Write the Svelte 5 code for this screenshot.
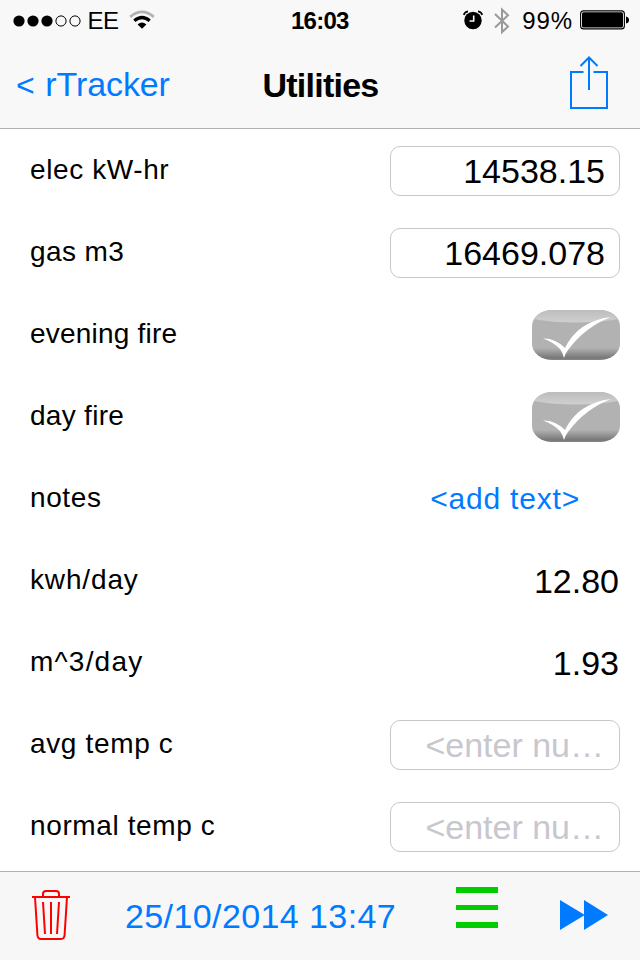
<script>
  const rows = [
    { label: 'elec kW-hr', tracking: 0.6, type: 'field', value: '14538.15' },
    { label: 'gas m3', tracking: 0.4, type: 'field', value: '16469.078' },
    { label: 'evening fire', tracking: 0.22, type: 'check' },
    { label: 'day fire', tracking: 0.3, type: 'check' },
    { label: 'notes', tracking: 0.6, type: 'link', value: '<add text>' },
    { label: 'kwh/day', tracking: 0.85, type: 'value', value: '12.80' },
    { label: 'm^3/day', tracking: 1.2, type: 'value', value: '1.93' },
    { label: 'avg temp c', tracking: 0.65, type: 'empty', value: '<enter nu…' },
    { label: 'normal temp c', tracking: 0.62, type: 'empty', value: '<enter nu…' }
  ];
</script>

<div class="screen">
  <header>
    <div class="status">
      <div class="side left">
        <svg class="dots" width="68" height="14" viewBox="0 0 68 14">
          <circle cx="6" cy="7" r="5.6" /><circle cx="20" cy="7" r="5.6" /><circle cx="34" cy="7" r="5.6" />
          <circle class="open" cx="48" cy="7" r="5.1" /><circle class="open" cx="62" cy="7" r="5.1" />
        </svg>
        <span class="carrier">EE</span>
        <svg class="wifi" width="26" height="20" viewBox="0 0 26 20" fill="none">
          <path d="M1.2 6.8Q13 -3 24.8 6.8" stroke="#b2b2b2" stroke-width="2.8" />
          <path d="M5.3 10.8Q13 4.2 20.7 10.8" stroke="#000" stroke-width="3.2" />
          <path d="M8.6 14.4Q13 10.6 17.4 14.4L13 18.8Z" fill="#000" />
        </svg>
      </div>
      <span class="time">16:03</span>
      <div class="side right">
        <svg class="alarm" width="20" height="20" viewBox="0 0 20 20" fill="none">
          <circle cx="10" cy="10.5" r="8.7" fill="#000" />
          <path d="M10.7 5.5V11H6.5" stroke="#f8f8f8" stroke-width="1.6" />
          <path d="M.8 5Q1.3 2 5 1.4M15 1.4Q18.7 2 19.2 5" stroke="#000" stroke-width="1.6" />
        </svg>
        <svg class="bluetooth" width="16" height="28" viewBox="0 0 16 28" fill="none">
          <path d="M1 7L14 19.5L8 25.2V2.5L14 8.2L1 20.5" stroke="#999" stroke-width="2" />
        </svg>
        <span class="percent">99%</span>
        <svg class="battery" width="50" height="20" viewBox="0 0 50 20">
          <rect x=".6" y=".9" width="43.8" height="18" rx="3" fill="none" stroke="#000" stroke-width="1.1" />
          <rect x="2" y="2.3" width="41" height="15.2" rx="1.6" />
          <path d="M46 6.5Q49 7 49 10T46 13.5Z" />
        </svg>
      </div>
    </div>
    <nav>
      <span class="back"><span class="chevron">&lt;</span> rTracker</span>
      <h1>Utilities</h1>
      <svg class="share" width="40" height="54" viewBox="0 0 40 54" fill="none" stroke="#007aff" stroke-width="2">
        <path d="M14.5 16H2V52H38V16H24.5M20 34V2M11.5 10L20 1.5L28.5 10" transform="translate(-1 0)" />
      </svg>
    </nav>
  </header>

  <main>
    {#each rows as row}
      <div class="row">
        <span class="label" style:letter-spacing="{row.tracking}px">{row.label}</span>
        {#if row.type === 'check'}
          <div class="check">
            <svg width="88" height="50" viewBox="0 0 88 50">
              <defs>
                <linearGradient id="gloss" x2="0" y2="1"><stop stop-color="#bdbdbd" /><stop offset="1" stop-color="#cfcfcf" /></linearGradient>
              </defs>
              <path d="M1 9Q3 0 19 0H69Q85 0 87 9Q67 12.5 44 12.5T1 9Z" fill="url(#gloss)" />
              <path d="M11 28.5Q23 28 33 38Q46 11 79 7Q53 17 36 40Q33 44 32 48Q31 43 28 39Q21 32 11 28.5Z" fill="#fff" />
            </svg>
          </div>
        {:else}
          <span class={row.type}>{row.value}</span>
        {/if}
      </div>
    {/each}
  </main>

  <footer>
    <svg class="trash" width="38" height="52" viewBox="0 0 38 52" fill="none" stroke="#f00" stroke-width="2">
      <path d="M0 8H38" />
      <path d="M11 8V5Q11 2 14 2H24Q27 2 27 5V8M3 8L5.4 46Q5.7 50 9 50H29Q32.3 50 32.6 46L35 8" />
      <path d="M11 13L13 45M19 13V45M27 13L25 45" />
    </svg>
    <span class="date">25/10/2014 13:47</span>
    <div class="menu"><i></i><i></i><i></i></div>
    <svg class="forward" width="48" height="30" viewBox="0 0 48 30"><path d="M0 0L24 14.5V0L48 15L24 30V15.5L0 30Z" fill="#007aff" /></svg>
  </footer>
</div>

<style>
  :global(body) { margin: 0; }
  .screen {
    width: 640px; height: 960px; display: flex; flex-direction: column;
    background: #fff; color: #000; overflow: hidden;
    font-family: "Liberation Sans", Arial, sans-serif; white-space: nowrap;
  }
  svg { display: block; flex: none; }
  header { box-sizing: border-box; height: 129px; background: #f8f8f8; border-bottom: 1px solid #b2b2b2; }
  .status { height: 40px; display: flex; align-items: center; font-size: 24px; line-height: 40px; }
  .side { flex: 1; display: flex; align-items: center; height: 40px; }
  .left { padding-left: 12.5px; }
  .dots { margin-top: 1px; }
  .dots circle { fill: #000; }
  .dots .open { fill: none; stroke: #000; stroke-width: 1; }
  .carrier { margin-left: 7px; padding-top: 2px; letter-spacing: -.6px; }
  .wifi { margin-left: 11px; }
  .time { font-weight: bold; letter-spacing: -.75px; padding: 2px 3px 0 0; }
  .right { justify-content: flex-end; padding-right: 10px; }
  .bluetooth { margin: 1px 0 0 11px; }
  .percent { margin-left: 12px; padding-top: 2px; letter-spacing: .9px; }
  .battery { margin-left: 7px; }
  nav { display: grid; grid-template-columns: 1fr auto 1fr; align-items: center; height: 84px; padding: 0 30px 0 16px; font-size: 34px; line-height: 84px; }
  .back { color: #007aff; letter-spacing: -.1px; padding-top: 2px; }
  .chevron { font-size: 32px; letter-spacing: 1.3px; }
  h1 { margin: 0; padding: 2px 0 0 15px; font-size: 34px; line-height: 84px; letter-spacing: -.75px; }
  .share { justify-self: end; margin-top: -2px; }
  main { height: 742px; box-sizing: border-box; padding-top: 1px; }
  .row { height: 82px; display: flex; justify-content: space-between; align-items: center; padding: 0 20px 0 30px; }
  .label { font-size: 28px; padding-bottom: 2px; }
  .field, .empty { box-sizing: border-box; width: 230px; height: 50px; border: 1px solid #c8c8c8; border-radius: 10px; padding: 0 14px; font-size: 34px; line-height: 48px; text-align: right; }
  .empty { color: #c7c7cd; padding-right: 15px; }
  .value { font-size: 34px; padding-right: 1px; }
  .link { color: #007aff; font-size: 30px; letter-spacing: .8px; margin-right: 40px; }
  .check { width: 88px; height: 50px; margin-top: -1px; border-radius: 20px / 16px; overflow: hidden; background: linear-gradient(#b2b2b2 0 76%, #777 96%, #888 100%); }
  footer { box-sizing: border-box; height: 89px; display: flex; align-items: center; background: #f7f7f7; border-top: 1px solid #b2b2b2; padding: 0 32px; }
  .trash { margin-top: -3px; }
  .date { margin-left: 55px; font-size: 34px; color: #007aff; letter-spacing: .4px; padding-top: 1px; width: 272px; }
  .menu { width: 42px; margin-left: 59px; margin-bottom: 17px; display: flex; flex-direction: column; gap: 12px; }
  .menu i { height: 5.7px; background: #00cc00; }
  .forward { margin-left: auto; margin-top: -3px; }
</style>
